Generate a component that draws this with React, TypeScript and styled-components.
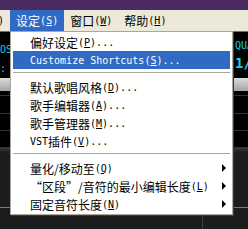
import React from 'react'
import styled, { createGlobalStyle } from 'styled-components'

const GlobalStyle = createGlobalStyle`
  html, body {
    margin: 0;
    padding: 0;
    background: #000;
  }
`

const cjkFont = `"Noto Sans CJK SC", "DejaVu Sans", sans-serif`
const latFont = `"DejaVu Sans Mono", "Liberation Mono", monospace`

const Page = styled.div`
  position: relative;
  width: 248px;
  height: 229px;
  overflow: hidden;
  display: flex;
  flex-direction: column;
  background: #000;
  font-family: ${cjkFont};
  font-size: 12px;
`

const TitleStrip = styled.div`
  height: 10px;
  background: #4b2b60;
`

const MenuBar = styled.div`
  height: 21px;
  display: flex;
  background: #ece9d8;
  white-space: nowrap;
`

const MenuBarItem = styled.div<{ $active?: boolean }>`
  display: flex;
  align-items: center;
  padding: 0 6px;
  color: ${p => (p.$active ? '#fff' : '#000')};
  background: ${p => (p.$active ? '#316ac5' : 'transparent')};
  &:first-child {
    margin-left: -20px;
  }
`

const Lat = styled.span`
  font-family: ${latFont};
  font-size: 10px;
  u {
    text-decoration: underline;
    text-underline-offset: 1px;
  }
`

const Workspace = styled.div`
  flex: 1;
  display: flex;
  flex-direction: column;
  border-top: 1px solid #6f6f6f;
`

const InfoStrip = styled.div`
  height: 46px;
  display: flex;
  justify-content: space-between;
  background: #000;
  color: #18d0ec;
  font-family: ${latFont};
`

const InfoLeft = styled.div`
  margin-left: -6px;
  padding-top: 8px;
  font-size: 10px;
  line-height: 19px;
`

const InfoRight = styled.div`
  width: 13px;
  overflow: hidden;
  white-space: nowrap;
  padding-top: 6px;
  div:first-child {
    font-size: 10px;
    line-height: 15px;
  }
  div:last-child {
    font-size: 14px;
    font-weight: bold;
    line-height: 20px;
  }
`

const GrayBand = styled.div`
  height: 13px;
  background: linear-gradient(#dadada, #a4a4a4);
`

const GridArea = styled.div`
  display: flex;
  flex-direction: column;
  background: #000;
`

const GridRow = styled.div<{ $h: number }>`
  height: ${p => p.$h}px;
  border-bottom: 1px solid #2c3838;
`

const Fade = styled.div`
  height: 4px;
  background: linear-gradient(#3a3a3a, #1c1c1c);
`

const Lower = styled.div`
  flex: 1;
  display: flex;
  flex-direction: column;
  background: #1c1c1c;
`

const LowerPane = styled.div<{ $h?: number }>`
  display: flex;
  height: ${p => (p.$h ? `${p.$h}px` : 'auto')};
  flex: ${p => (p.$h ? 'none' : 1)};
`

const Track = styled.div<{ $w?: number }>`
  width: ${p => (p.$w ? `${p.$w}px` : 'auto')};
  flex: ${p => (p.$w ? 'none' : 1)};
  & + & {
    border-left: 1px solid #3c3c3c;
  }
`

const Rule = styled.div`
  height: 1px;
  background: #777;
`

const Dropdown = styled.div`
  position: absolute;
  top: 31px;
  left: 10px;
  width: 223px;
  box-sizing: border-box;
  padding: 1px 2px;
  background: #fff;
  border: 1px solid #aca899;
  box-shadow: 1px 1px 0 #3a3a3a;
`

const Item = styled.div<{ $active?: boolean }>`
  height: 18px;
  display: flex;
  align-items: center;
  padding: 0 4px 0 17px;
  white-space: nowrap;
  color: ${p => (p.$active ? '#fff' : '#000')};
  background: ${p => (p.$active ? '#316ac5' : 'transparent')};
`

const Arrow = styled.span`
  margin-left: auto;
  width: 0;
  height: 0;
  border-left: 4px solid #000;
  border-top: 4px solid transparent;
  border-bottom: 4px solid transparent;
`

const Separator = styled.div`
  height: 1px;
  margin: 3px 0 5px;
  background: #aca899;
`

type Entry = { label: React.ReactNode; key: string; dots?: boolean; sub?: boolean; active?: boolean } | 'sep'

const entries: Entry[] = [
  { label: '偏好设定', key: 'P', dots: true },
  { label: <Lat>Customize Shortcuts</Lat>, key: 'S', dots: true, active: true },
  'sep',
  { label: '默认歌唱风格', key: 'D', dots: true },
  { label: '歌手编辑器', key: 'A', dots: true },
  { label: '歌手管理器', key: 'M', dots: true },
  { label: <><Lat>VST</Lat>插件</>, key: 'V', dots: true },
  'sep',
  { label: '量化/移动至', key: 'Q', sub: true },
  { label: '“区段”/音符的最小编辑长度', key: 'L', sub: true },
  { label: '固定音符长度', key: 'N', sub: true },
]

const Mnemonic = ({ k, dots }: { k: string; dots?: boolean }) => (
  <Lat>
    (<u>{k}</u>){dots ? '...' : ''}
  </Lat>
)

export default function App() {
  return (
    <Page>
      <GlobalStyle />
      <TitleStrip />
      <MenuBar>
        <MenuBarItem>
          <Mnemonic k="D" />
        </MenuBarItem>
        <MenuBarItem $active>
          设定<Mnemonic k="S" />
        </MenuBarItem>
        <MenuBarItem>
          窗口<Mnemonic k="W" />
        </MenuBarItem>
        <MenuBarItem>
          帮助<Mnemonic k="H" />
        </MenuBarItem>
      </MenuBar>
      <Workspace>
        <InfoStrip>
          <InfoLeft>
            <div>POS</div>
            <div>M:</div>
          </InfoLeft>
          <InfoRight>
            <div>QUANTIZE</div>
            <div>1/16</div>
          </InfoRight>
        </InfoStrip>
        <GrayBand />
        <GridArea>
          <GridRow $h={4} />
          <GridRow $h={17} />
          <GridRow $h={16} />
          <GridRow $h={16} />
        </GridArea>
        <Fade />
        <Lower>
          <LowerPane $h={55}>
            <Track />
          </LowerPane>
          <Rule />
          <LowerPane>
            <Track $w={202} />
            <Track />
          </LowerPane>
        </Lower>
      </Workspace>
      <Dropdown>
        {entries.map((e, i) =>
          e === 'sep' ? (
            <Separator key={i} />
          ) : (
            <Item key={i} $active={e.active}>
              {e.label}
              <Mnemonic k={e.key} dots={e.dots} />
              {e.sub && <Arrow />}
            </Item>
          )
        )}
      </Dropdown>
    </Page>
  )
}
